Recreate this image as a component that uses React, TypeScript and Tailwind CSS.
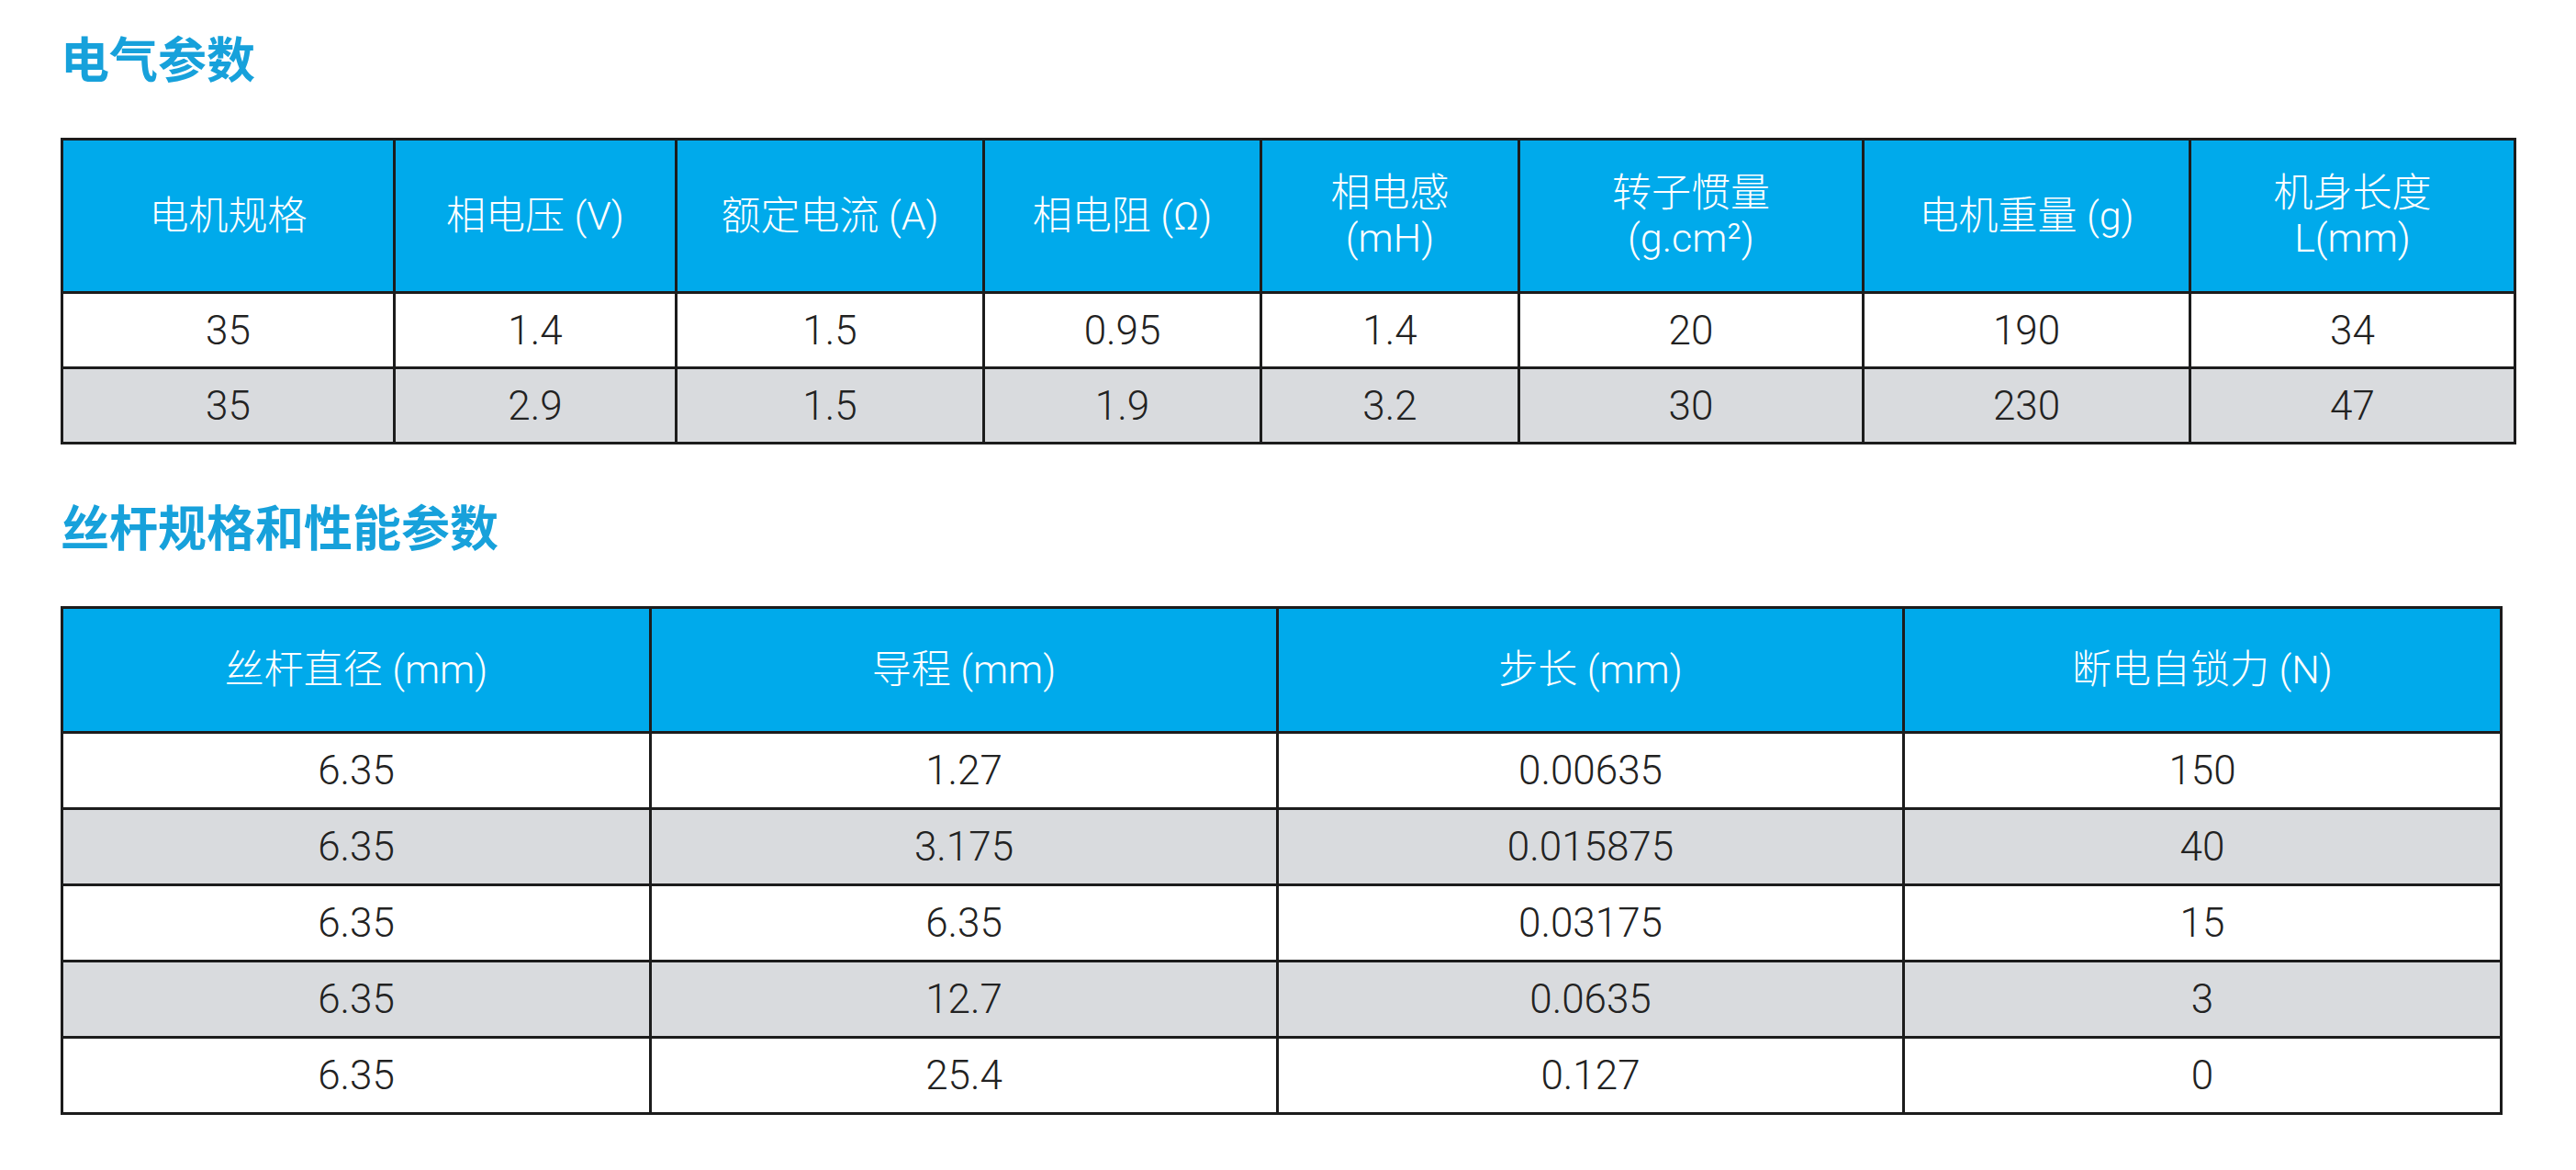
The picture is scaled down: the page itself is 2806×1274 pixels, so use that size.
import React from "react";

type Row = string[];

const electricalHead: React.ReactNode[] = [
  "电机规格",
  "相电压 (V)",
  "额定电流 (A)",
  "相电阻 (Ω)",
  <>相电感<br />(mH)</>,
  <>转子惯量<br />(g.cm²)</>,
  "电机重量 (g)",
  <>机身长度<br />L(mm)</>,
];

const electricalRows: Row[] = [
  ["35", "1.4", "1.5", "0.95", "1.4", "20", "190", "34"],
  ["35", "2.9", "1.5", "1.9", "3.2", "30", "230", "47"],
];

const screwHead: React.ReactNode[] = ["丝杆直径 (mm)", "导程 (mm)", "步长 (mm)", "断电自锁力 (N)"];

const screwRows: Row[] = [
  ["6.35", "1.27", "0.00635", "150"],
  ["6.35", "3.175", "0.015875", "40"],
  ["6.35", "6.35", "0.03175", "15"],
  ["6.35", "12.7", "0.0635", "3"],
  ["6.35", "25.4", "0.127", "0"],
];

function Title({ children }: { children: React.ReactNode }) {
  return (
    <h2 className="text-[53px] leading-[52px] font-bold text-[#17a1db] [font-family:'Noto_Sans_CJK_SC',sans-serif]">
      {children}
    </h2>
  );
}

function SpecTable({
  widths,
  head,
  rows,
  headHeight,
  rowHeight,
}: {
  widths: string[];
  head: React.ReactNode[];
  rows: Row[];
  headHeight: string;
  rowHeight: string;
}) {
  return (
    <table className="table-fixed border-collapse border-[3px] border-[#1c1c1c] text-center [font-family:Roboto,'Noto_Sans_CJK_SC',sans-serif] font-light">
      <colgroup>
        {widths.map((w, i) => (
          <col key={i} className={w} />
        ))}
      </colgroup>
      <thead>
        <tr className={headHeight}>
          {head.map((h, i) => (
            <th
              key={i}
              className="border-[3px] border-[#1c1c1c] bg-[#00aaeb] text-white font-light text-[43px] leading-[49px] align-middle"
            >
              {h}
            </th>
          ))}
        </tr>
      </thead>
      <tbody>
        {rows.map((r, ri) => (
          <tr key={ri} className={`${rowHeight} ${ri % 2 === 1 ? "bg-[#d9dbde]" : "bg-white"}`}>
            {r.map((c, ci) => (
              <td key={ci} className="border-[3px] border-[#1c1c1c] text-[44px] leading-none text-[#222] align-middle">
                {c}
              </td>
            ))}
          </tr>
        ))}
      </tbody>
    </table>
  );
}

export default function App() {
  return (
    <div className="w-[2806px] h-[1274px] bg-white pl-[66px] pt-[36px]">
      <Title>电气参数</Title>
      <div className="mt-[62px]">
        <SpecTable
          widths={["w-[362px]", "w-[307px]", "w-[335px]", "w-[302px]", "w-[281px]", "w-[375px]", "w-[356px]", "w-[354px]"]}
          head={electricalHead}
          rows={electricalRows}
          headHeight="h-[167px]"
          rowHeight="h-[82px]"
        />
      </div>
      <div className="mt-[62px]">
        <Title>丝杆规格和性能参数</Title>
      </div>
      <div className="mt-[62px]">
        <SpecTable
          widths={["w-[641px]", "w-[683px]", "w-[682px]", "w-[651px]"]}
          head={screwHead}
          rows={screwRows}
          headHeight="h-[136px]"
          rowHeight="h-[83px]"
        />
      </div>
    </div>
  );
}
